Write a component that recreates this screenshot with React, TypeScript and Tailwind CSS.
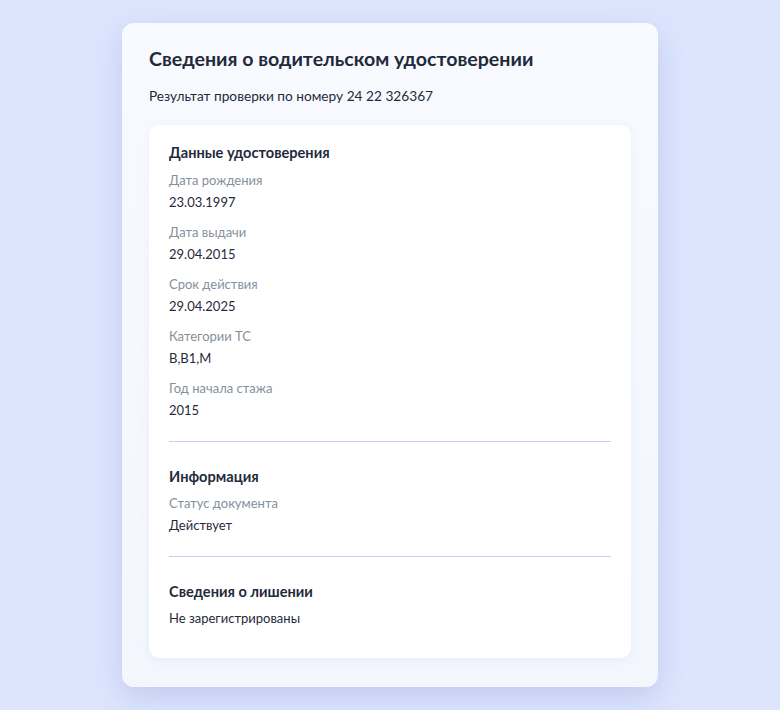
const fields = [
  { label: 'Дата рождения', value: '23.03.1997' },
  { label: 'Дата выдачи', value: '29.04.2015' },
  { label: 'Срок действия', value: '29.04.2025' },
  { label: 'Категории ТС', value: 'B,B1,M' },
  { label: 'Год начала стажа', value: '2015' },
]

function Field({ label, value, first }: { label: string; value: string; first?: boolean }) {
  return (
    <div className={first ? 'mt-[7px]' : 'mt-[10px]'}>
      <p className="text-[13px] leading-5 text-[#86909c]">{label}</p>
      <p className="mt-[2px] text-[13px] leading-5 text-[#1f2a3c]">{value}</p>
    </div>
  )
}

export default function App() {
  return (
    <div
      className="min-h-[710px] bg-[#dde5fd] pt-[23px] pb-6"
      style={{ fontFamily: 'Lato, "Noto Sans", sans-serif' }}
    >
      <div className="mx-auto w-[536px] rounded-[12px] bg-gradient-to-b from-[#f8faff] to-[#f3f6fd] px-[27px] pt-[22px] pb-[29px] shadow-[0_10px_28px_rgba(90,110,190,0.22)]">
        <h1 className="text-[19.6px] leading-7 font-bold text-[#1f2a3c]">
          Сведения о водительском удостоверении
        </h1>
        <p className="mt-[13px] text-[13.7px] leading-5 text-[#1f2a3c]">
          Результат проверки по номеру 24 22 326367
        </p>

        <div className="mt-[19px] rounded-[10px] bg-white px-5 pt-[18px] pb-[30px] shadow-[0_2px_10px_rgba(90,110,190,0.08)]">
          {/* Данные */}
          <h2 className="text-[14.6px] leading-5 font-bold text-[#1f2a3c]">Данные удостоверения</h2>
          {fields.map((f, i) => (
            <Field key={f.label} label={f.label} value={f.value} first={i === 0} />
          ))}

          <div className="mt-[21px] h-px bg-[#c2cffb]" />

          {/* Информация */}
          <h2 className="mt-[25px] text-[14.6px] leading-5 font-bold text-[#1f2a3c]">Информация</h2>
          <div className="mt-[6px]">
            <p className="text-[13px] leading-5 text-[#86909c]">Статус документа</p>
            <p className="mt-[2px] text-[13px] leading-5 text-[#1f2a3c]">Действует</p>
          </div>

          <div className="mt-[21px] h-px bg-[#c2cffb]" />

          {/* Лишение */}
          <h2 className="mt-[25px] text-[14.6px] leading-5 font-bold text-[#1f2a3c]">Сведения о лишении</h2>
          <p className="mt-[6px] text-[13px] leading-5 text-[#1f2a3c]">Не зарегистрированы</p>
        </div>
      </div>
    </div>
  )
}
